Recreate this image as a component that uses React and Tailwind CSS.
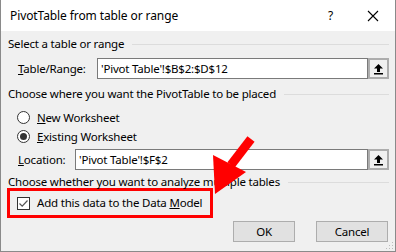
import React from "react";

function GroupHeader({ children }) {
  return (
    <div className="flex h-4 items-center gap-2 pr-[6px]">
      <span className="whitespace-nowrap">{children}</span>
      <div className="h-px flex-1 bg-[#dcdcdc]" />
    </div>
  );
}

function RangeButton() {
  return (
    <div className="flex h-[21px] w-[21px] items-center justify-center border-2 border-[#adadad] bg-[#f0f0f0]">
      <svg width="11" height="12" viewBox="0 0 11 12">
        <path d="M5.5 1 L10 5.5 L7 5.5 L7 9 L4 9 L4 5.5 L1 5.5 Z" fill="#000" />
        <rect x="1" y="10" width="9" height="1.5" fill="#000" />
      </svg>
    </div>
  );
}

function RangeInput({ label, value, labelWidth }) {
  return (
    <div className="flex h-[21px] items-center pl-[10px] pr-[6px]">
      <div className={labelWidth}>{label}</div>
      <div className="flex h-[21px] flex-1 items-center border border-[#7a7a7a] bg-white pl-[3px]">
        {value}
      </div>
      <RangeButton />
    </div>
  );
}

function Radio({ checked, children }) {
  return (
    <div className="flex h-[19px] items-center gap-[7px] pl-[9px]">
      <div className="flex h-[13px] w-[13px] items-center justify-center rounded-full border border-[#333] bg-white">
        {checked && <div className="h-[7px] w-[7px] rounded-full bg-[#333]" />}
      </div>
      <span>{children}</span>
    </div>
  );
}

export default function App() {
  return (
    <div
      className="relative h-[252px] w-[396px] overflow-hidden border border-t-0 border-[#8a8a8a] bg-[#f0f0f0] text-[11.5px] tracking-[-0.2px] text-black"
      style={{ fontFamily: '"Noto Sans", "Open Sans", sans-serif' }}
    >
      <div className="flex h-[31px] items-center bg-white pl-[9px] pr-[16px] text-[12px] tracking-[-0.1px]">
        <span className="flex-1">PivotTable from table or range</span>
        <span className="mr-[34px]">?</span>
        <svg width="12" height="12" viewBox="0 0 12 12">
          <path d="M1 1 L11 11 M11 1 L1 11" stroke="#000" strokeWidth="1.1" />
        </svg>
      </div>

      <div className="flex flex-col pl-[7px] pt-[5px]">
        <GroupHeader>Select a table or range</GroupHeader>
        <div className="mt-[6px]">
          <RangeInput
            labelWidth="w-[79px]"
            label={
              <>
                <u>T</u>able/Range:
              </>
            }
            value="'Pivot Table'!$B$2:$D$12"
          />
        </div>
        <div className="mt-[7px]">
          <GroupHeader>Choose where you want the PivotTable to be placed</GroupHeader>
        </div>
        <div className="mt-[6px] flex flex-col">
          <Radio>
            <u>N</u>ew Worksheet
          </Radio>
          <Radio checked>
            <u>E</u>xisting Worksheet
          </Radio>
        </div>
        <div className="mt-[3px]">
          <RangeInput
            labelWidth="w-[57px]"
            label={
              <>
                <u>L</u>ocation:
              </>
            }
            value="'Pivot Table'!$F$2"
          />
        </div>
        <div className="mt-[4px]">
          <GroupHeader>Choose whether you want to analyze multiple tables</GroupHeader>
        </div>
      </div>

      <div className="ml-[6px] mt-[-2px] flex h-[30px] w-[206px] items-center gap-[7px] border-[3px] border-[#ff0000] pl-[7px]">
        <div className="flex h-[13px] w-[13px] items-center justify-center border border-[#333] bg-white">
          <svg width="11" height="11" viewBox="0 0 11 11">
            <path d="M1.5 5.5 L4.2 8.2 L9.5 2.5" stroke="#555" strokeWidth="1.2" fill="none" />
          </svg>
        </div>
        <span className="whitespace-nowrap">
          Add this data to the Data <u>M</u>odel
        </span>
      </div>

      <div className="mt-[3px] flex justify-end gap-[21px] pr-[7px]">
        <button className="h-[21px] w-[62px] border border-[#adadad] bg-[#e1e1e1]">OK</button>
        <button className="h-[21px] w-[72px] border border-[#adadad] bg-[#e1e1e1]">Cancel</button>
      </div>

      <svg className="absolute bottom-[1px] right-[1px]" width="8" height="8" viewBox="0 0 8 8">
        <rect x="6" y="0" width="1" height="1" fill="#bcbcbc" />
        <rect x="3" y="3" width="1" height="1" fill="#bcbcbc" />
        <rect x="6" y="3" width="1" height="1" fill="#bcbcbc" />
        <rect x="0" y="6" width="1" height="1" fill="#bcbcbc" />
        <rect x="3" y="6" width="1" height="1" fill="#bcbcbc" />
        <rect x="6" y="6" width="1" height="1" fill="#bcbcbc" />
      </svg>

      <svg className="absolute left-0 top-0" width="396" height="252" viewBox="0 0 396 252">
        <line x1="250" y1="139" x2="230" y2="165" stroke="#ff0000" strokeWidth="9" />
        <polygon points="214,194 212,155 245,172" fill="#ff0000" />
      </svg>
    </div>
  );
}
